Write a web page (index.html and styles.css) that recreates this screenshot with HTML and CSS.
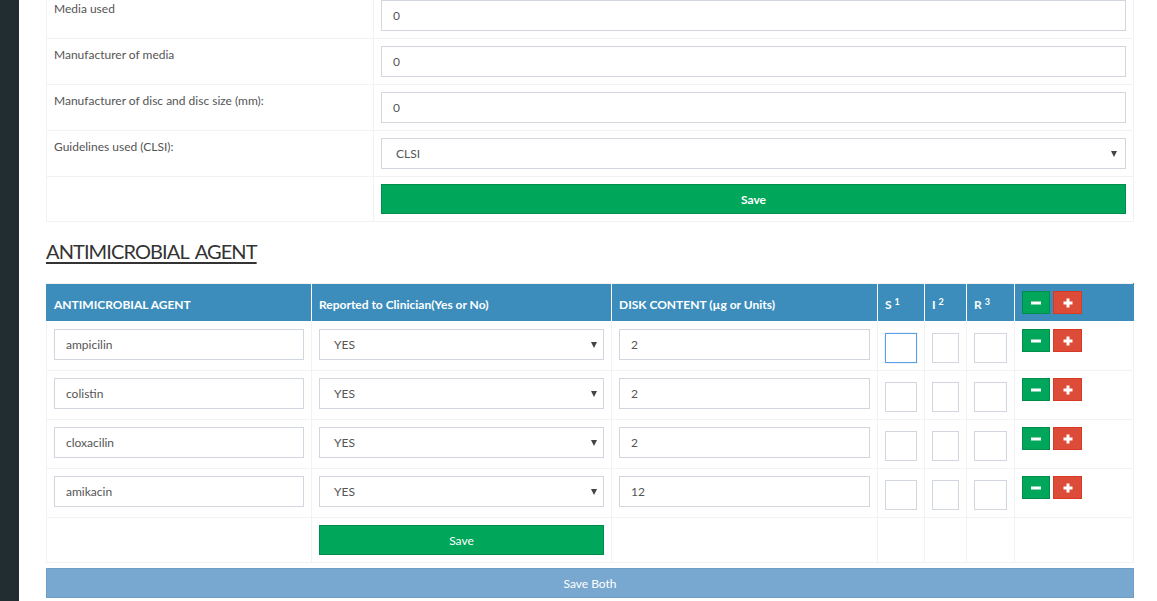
FILE: index.html
```html
<!DOCTYPE html>
<html>
<head>
<meta charset="utf-8">
<link rel="stylesheet" href="styles.css">
</head>
<body>
<div class="layout">
  <aside class="sidebar"></aside>
  <main class="content">
    <table class="form-table">
      <colgroup><col class="c-label"><col class="c-field"></colgroup>
      <tr><td class="label">Media used</td><td><input class="field" type="text" value="0"></td></tr>
      <tr><td class="label">Manufacturer of media</td><td><input class="field" type="text" value="0"></td></tr>
      <tr><td class="label">Manufacturer of disc and disc size (mm):</td><td><input class="field" type="text" value="0"></td></tr>
      <tr><td class="label">Guidelines used (CLSI):</td><td><div class="select"><span>CLSI</span><i class="caret"></i></div></td></tr>
      <tr><td class="label"></td><td><button class="btn-save">Save</button></td></tr>
    </table>

    <h3 class="section-title">ANTIMICROBIAL AGENT</h3>

    <table class="agent-table">
      <colgroup>
        <col class="w-agent"><col class="w-rep"><col class="w-disk"><col class="w-s"><col class="w-i"><col class="w-r"><col class="w-act">
      </colgroup>
      <thead>
        <tr>
          <th>ANTIMICROBIAL AGENT</th>
          <th>Reported to Clinician(Yes or No)</th>
          <th>DISK CONTENT (µg or Units)</th>
          <th>S<sup>1</sup></th>
          <th>I<sup>2</sup></th>
          <th>R<sup>3</sup></th>
          <th class="act-th"><span class="actions"><button class="ib minus"><svg width="10" height="10" viewBox="0 0 10 10"><rect x="0" y="3.5" width="10" height="3" fill="#fff"/></svg></button><button class="ib plus"><svg width="10" height="10" viewBox="0 0 10 10"><rect x="0.5" y="3.5" width="9" height="3" fill="#fff"/><rect x="3.5" y="0.5" width="3" height="9" fill="#fff"/></svg></button></span></th>
        </tr>
      </thead>
      <tbody>
        <tr>
          <td><input class="field" type="text" value="ampicilin"></td>
          <td><div class="select sm"><span>YES</span><i class="caret"></i></div></td>
          <td><input class="field" type="text" value="2"></td>
          <td><div class="box s focus"></div></td>
          <td><div class="box i"></div></td>
          <td><div class="box r"></div></td>
          <td><span class="actions"><button class="ib minus"><svg width="10" height="10" viewBox="0 0 10 10"><rect x="0" y="3.5" width="10" height="3" fill="#fff"/></svg></button><button class="ib plus"><svg width="10" height="10" viewBox="0 0 10 10"><rect x="0.5" y="3.5" width="9" height="3" fill="#fff"/><rect x="3.5" y="0.5" width="3" height="9" fill="#fff"/></svg></button></span></td>
        </tr>
        <tr>
          <td><input class="field" type="text" value="colistin"></td>
          <td><div class="select sm"><span>YES</span><i class="caret"></i></div></td>
          <td><input class="field" type="text" value="2"></td>
          <td><div class="box s"></div></td>
          <td><div class="box i"></div></td>
          <td><div class="box r"></div></td>
          <td><span class="actions"><button class="ib minus"><svg width="10" height="10" viewBox="0 0 10 10"><rect x="0" y="3.5" width="10" height="3" fill="#fff"/></svg></button><button class="ib plus"><svg width="10" height="10" viewBox="0 0 10 10"><rect x="0.5" y="3.5" width="9" height="3" fill="#fff"/><rect x="3.5" y="0.5" width="3" height="9" fill="#fff"/></svg></button></span></td>
        </tr>
        <tr>
          <td><input class="field" type="text" value="cloxacilin"></td>
          <td><div class="select sm"><span>YES</span><i class="caret"></i></div></td>
          <td><input class="field" type="text" value="2"></td>
          <td><div class="box s"></div></td>
          <td><div class="box i"></div></td>
          <td><div class="box r"></div></td>
          <td><span class="actions"><button class="ib minus"><svg width="10" height="10" viewBox="0 0 10 10"><rect x="0" y="3.5" width="10" height="3" fill="#fff"/></svg></button><button class="ib plus"><svg width="10" height="10" viewBox="0 0 10 10"><rect x="0.5" y="3.5" width="9" height="3" fill="#fff"/><rect x="3.5" y="0.5" width="3" height="9" fill="#fff"/></svg></button></span></td>
        </tr>
        <tr>
          <td><input class="field" type="text" value="amikacin"></td>
          <td><div class="select sm"><span>YES</span><i class="caret"></i></div></td>
          <td><input class="field" type="text" value="12"></td>
          <td><div class="box s"></div></td>
          <td><div class="box i"></div></td>
          <td><div class="box r"></div></td>
          <td><span class="actions"><button class="ib minus"><svg width="10" height="10" viewBox="0 0 10 10"><rect x="0" y="3.5" width="10" height="3" fill="#fff"/></svg></button><button class="ib plus"><svg width="10" height="10" viewBox="0 0 10 10"><rect x="0.5" y="3.5" width="9" height="3" fill="#fff"/><rect x="3.5" y="0.5" width="3" height="9" fill="#fff"/></svg></button></span></td>
        </tr>
        <tr class="foot-row">
          <td></td>
          <td><button class="btn-save small">Save</button></td>
          <td></td><td></td><td></td><td></td><td></td>
        </tr>
      </tbody>
    </table>

    <button class="btn-both">Save Both</button>
  </main>
</div>
</body>
</html>
```

FILE: styles.css
```css
* { box-sizing: border-box; }
html, body { margin: 0; padding: 0; background: #fff; }
body {
  font-family: "Lato", "Open Sans", sans-serif;
  font-size: 12px;
  color: #444;
  overflow: hidden;
}
.layout { display: flex; min-height: 601px; }
.sidebar { width: 19px; flex: none; background: #222d32; }
.content { width: 1088px; margin-left: 27px; }

/* top form table */
.form-table {
  width: 1088px;
  table-layout: fixed;
  border-collapse: collapse;
  margin-top: -8px;
}
.form-table .c-label { width: 327px; }
.form-table td {
  border: 1px solid #f2f2f2;
  padding: 7px 7px;
  vertical-align: top;
  line-height: 17px;
}
.form-table td.label { color: #555; }

.field {
  display: block;
  width: 100%;
  height: 31px;
  border: 1px solid #d2d6de;
  padding: 0 11px;
  font-family: inherit;
  font-size: 12px;
  color: #555;
  background: #fff;
  outline: none;
}
.select {
  display: flex;
  align-items: center;
  justify-content: space-between;
  height: 31px;
  border: 1px solid #d2d6de;
  padding: 0 8px 0 14px;
  color: #555;
}
.select.sm { padding-right: 6px; }
.caret {
  width: 0; height: 0;
  border-left: 3.5px solid transparent;
  border-right: 3.5px solid transparent;
  border-top: 6px solid #444;
}
.btn-save {
  display: block;
  width: 100%;
  height: 30px;
  background: #00a65a;
  border: 1px solid #008d4c;
  color: #fff;
  font-family: inherit;
  font-size: 12px;
  font-weight: 700;
}
.btn-save.small { height: 30px; font-weight: 400; }

.section-title {
  margin: 17px 0 20px;
  font-size: 20px;
  letter-spacing: -0.9px;
  word-spacing: 3px;
  font-weight: 400;
  color: #333;
  text-decoration: underline;
  text-underline-offset: 3px;
  line-height: 24px;
}

/* agent table */
.agent-table {
  width: 1088px;
  table-layout: fixed;
  border-collapse: collapse;
  border: 1px solid #f2f2f2;
}
.w-agent { width: 265px; }
.w-rep { width: 300px; }
.w-disk { width: 266px; }
.w-s { width: 47px; }
.w-i { width: 42px; }
.w-r { width: 48px; }
.agent-table th {
  background: #3c8dbc;
  color: #fff;
  font-weight: 700;
  text-align: left;
  padding: 12px 7px 8px;
  line-height: 17px;
  height: 38px;
  border: 1px solid #fff;
  border-top: 1px solid #f2f2f2;
  white-space: nowrap;
  vertical-align: top;
}
.agent-table th:first-child { border-left-color: #3c8dbc; }
.agent-table th:last-child { border-right-color: #3c8dbc; }
.agent-table th.act-th { padding-top: 7px; padding-bottom: 7px; }
.agent-table sup {
  font-size: 9px;
  margin-left: 3px;
  vertical-align: baseline;
  position: relative;
  top: -4px;
  line-height: 0;
}
.agent-table td {
  border: 1px solid #f2f2f2;
  padding: 7px 7px 7px;
  vertical-align: top;
}
.agent-table .foot-row td { padding: 7px 7px 7px; height: 45px; }

.box {
  margin-top: 4px;
  height: 30px;
  border: 1px solid #d2d6de;
}
.box.s { width: 32px; }
.box.i { width: 27px; }
.box.r { width: 33px; }
.box.focus { border-color: #5a9de6; box-shadow: 0 0 1px #8ab8ee; }

.actions { display: flex; gap: 3px; }
.ib {
  display: flex;
  align-items: center;
  justify-content: center;
  width: 29px;
  height: 23px;
  padding: 0;
  border: 1px solid;
}
.ib.minus { background: #00a65a; border-color: #008d4c; width: 28px; }
.ib.plus { background: #dd4b39; border-color: #d73925; }

.btn-both {
  display: block;
  width: 100%;
  height: 30px;
  margin-top: 5px;
  background: #78a8cf;
  border: 1px solid #6e9ec6;
  color: #fff;
  font-family: inherit;
  font-size: 12px;
}
```
